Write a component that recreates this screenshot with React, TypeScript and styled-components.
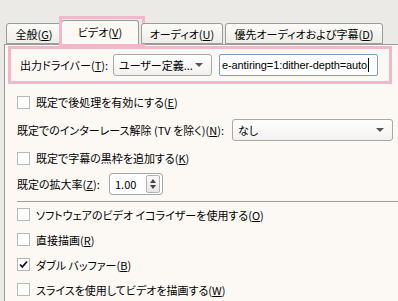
import React from "react";
import styled, { createGlobalStyle } from "styled-components";

const Global = createGlobalStyle`
  html, body { margin: 0; padding: 0; }
  body {
    background: #eceae6;
    font-family: "Noto Sans CJK JP", "Noto Sans", sans-serif;
    font-size: 11px;
    font-feature-settings: "palt";
    color: #000;
    overflow: hidden;
  }
`;

const Root = styled.div`
  width: 398px;
  height: 301px;
  overflow: hidden;
  padding-left: 4px;
  box-sizing: border-box;
  background: #eceae6;
`;

const TabStrip = styled.div`
  display: flex;
  align-items: flex-end;
  height: 44px;
  padding-left: 2px;
  position: relative;
  z-index: 1;
`;

const Tab = styled.div<{ $active?: boolean; $w: number }>`
  position: relative;
  box-sizing: border-box;
  width: ${(p) => p.$w}px;
  height: ${(p) => (p.$active ? 25 : 21)}px;
  margin-bottom: ${(p) => (p.$active ? -1 : 0)}px;
  margin-right: 2px;
  margin-left: ${(p) => (p.$active ? -3 : 0)}px;
  border: 1px solid #9a9c9a;
  border-bottom: ${(p) => (p.$active ? "none" : "1px solid #9a9c9a")};
  border-radius: 3px 3px 0 0;
  background: ${(p) =>
    p.$active ? "#fcf9f5" : "linear-gradient(#fbfbf9, #eeede8)"};
  display: flex;
  align-items: center;
  justify-content: center;
  padding-bottom: ${(p) => (p.$active ? 3 : 0)}px;
  white-space: nowrap;
`;

const TabMark = styled.div`
  position: absolute;
  left: -3px;
  right: -7px;
  top: -5px;
  bottom: -2px;
  border: 3px solid #f4b6cb;
  pointer-events: none;
`;

const Panel = styled.div`
  box-sizing: border-box;
  height: 260px;
  border-left: 1px solid #9a9c9a;
  border-top: 1px solid #9a9c9a;
  background: #fcf9f5;
  padding-top: 1px;
  display: flex;
  flex-direction: column;
`;

const Highlight = styled.div`
  margin-left: 3px;
  width: 384px;
  height: 38px;
  box-sizing: border-box;
  border: 3px solid #f4b6cb;
  display: flex;
  align-items: center;
  padding-left: 9px;
`;

const Rows = styled.div`
  padding-top: 5px;
  padding-left: 12px;
  display: flex;
  flex-direction: column;
`;

const Row = styled.div<{ $h: number }>`
  height: ${(p) => p.$h}px;
  display: flex;
  align-items: center;
  white-space: nowrap;
`;

const Label = styled.span<{ $w?: number }>`
  display: inline-block;
  ${(p) => (p.$w ? `width: ${p.$w}px;` : "")}
  white-space: nowrap;
`;

const Box = styled.span`
  width: 13px;
  height: 13px;
  box-sizing: border-box;
  border: 1px solid #b9b8b4;
  background: #fff;
  margin-right: 6px;
  display: inline-flex;
  align-items: center;
  justify-content: center;
  flex: none;
`;

const Select = styled.div<{ $w: number }>`
  box-sizing: border-box;
  width: ${(p) => p.$w}px;
  height: 22px;
  border: 1px solid #a7a7a5;
  border-radius: 3px;
  background: linear-gradient(#ffffff, #f2f1ef);
  display: flex;
  align-items: center;
  padding-left: 5px;
  padding-right: 8px;
  flex: none;
`;

const SelectText = styled.span`
  flex: 1;
  overflow: hidden;
  white-space: nowrap;
`;

const Arrow = styled.span`
  width: 0;
  height: 0;
  border-left: 4px solid transparent;
  border-right: 4px solid transparent;
  border-top: 4px solid #555;
`;

const TextInput = styled.div`
  box-sizing: border-box;
  width: 159px;
  height: 22px;
  margin-left: 7px;
  border: 1px solid #7a9dc0;
  border-radius: 2px;
  background: #fff;
  display: flex;
  align-items: center;
  justify-content: flex-start;
  padding: 0 2px 0 2px;
  overflow: hidden;
  white-space: nowrap;
  flex: none;
  font-family: "Liberation Sans", "Noto Sans", sans-serif;
  font-size: 11px;
  letter-spacing: -0.1px;
`;

const Caret = styled.span`
  display: inline-block;
  width: 1px;
  height: 14px;
  background: #000;
  margin-left: 1px;
`;

const Spin = styled.div`
  box-sizing: border-box;
  width: 54px;
  height: 22px;
  border: 1px solid #a7a7a5;
  border-radius: 3px;
  background: #fff;
  display: flex;
  align-items: center;
  padding-left: 5px;
  padding-right: 2px;
  flex: none;
`;

const SpinButtons = styled.div`
  width: 14px;
  height: 18px;
  border: 1px solid #b4b4b2;
  border-radius: 2px;
  background: linear-gradient(#fafafa, #e8e7e4);
  display: flex;
  flex-direction: column;
  align-items: center;
  justify-content: space-around;
  box-sizing: border-box;
  padding: 2px 0;
`;

const TriUp = styled.span`
  width: 0;
  height: 0;
  border-left: 3px solid transparent;
  border-right: 3px solid transparent;
  border-bottom: 4px solid #444;
`;
const TriDown = styled.span`
  width: 0;
  height: 0;
  border-left: 3px solid transparent;
  border-right: 3px solid transparent;
  border-top: 4px solid #444;
`;

const Separator = styled.div`
  margin-top: 4px;
  border-top: 1px solid #a29f9b;
  height: 0;
`;

const Check = ({ checked, children }: { checked?: boolean; children: React.ReactNode }) => (
  <Row $h={25}>
    <Box>
      {checked && (
        <svg width="9" height="9" viewBox="0 0 9 9">
          <path d="M1 4.5 L3.3 7 L8 1.5" stroke="#111" strokeWidth="1.8" fill="none" />
        </svg>
      )}
    </Box>
    <Label>{children}</Label>
  </Row>
);

const U = styled.u`
  text-underline-offset: 1px;
`;

export default function App() {
  return (
    <Root>
      <Global />
      <TabStrip>
        <Tab $w={56}>全般(<U>G</U>)</Tab>
        <Tab $w={78} $active>
          ビデオ(<U>V</U>)
          <TabMark />
        </Tab>
        <Tab $w={82}>オーディオ(<U>U</U>)</Tab>
        <Tab $w={158}>優先オーディオおよび字幕(<U>D</U>)</Tab>
      </TabStrip>
      <Panel>
        <Highlight>
          <Label $w={93}>出力ドライバー(<U>T</U>):</Label>
          <Select $w={99}>
            <SelectText>ユーザー定義...</SelectText>
            <Arrow />
          </Select>
          <TextInput>
            e-antiring=1:dither-depth=auto<Caret />
          </TextInput>
        </Highlight>
        <Rows>
          <Row $h={26}>
            <Box />
            <Label>既定で後処理を有効にする(<U>E</U>)</Label>
          </Row>
          <Row $h={30}>
            <Label $w={215}>既定でのインターレース解除 (TV を除く)(<U>N</U>):</Label>
            <Select $w={161}>
              <SelectText>なし</SelectText>
              <Arrow />
            </Select>
          </Row>
          <Row $h={26}>
            <Box />
            <Label>既定で字幕の黒枠を追加する(<U>K</U>)</Label>
          </Row>
          <Row $h={26}>
            <Label $w={92}>既定の拡大率(<U>Z</U>):</Label>
            <Spin>
              <SelectText>1.00</SelectText>
              <SpinButtons>
                <TriUp />
                <TriDown />
              </SpinButtons>
            </Spin>
          </Row>
          <Separator />
          <Check>ソフトウェアのビデオ イコライザーを使用する(<U>O</U>)</Check>
          <Check>直接描画(<U>R</U>)</Check>
          <Check checked>ダブル バッファー(<U>B</U>)</Check>
          <Check>スライスを使用してビデオを描画する(<U>W</U>)</Check>
        </Rows>
      </Panel>
    </Root>
  );
}
